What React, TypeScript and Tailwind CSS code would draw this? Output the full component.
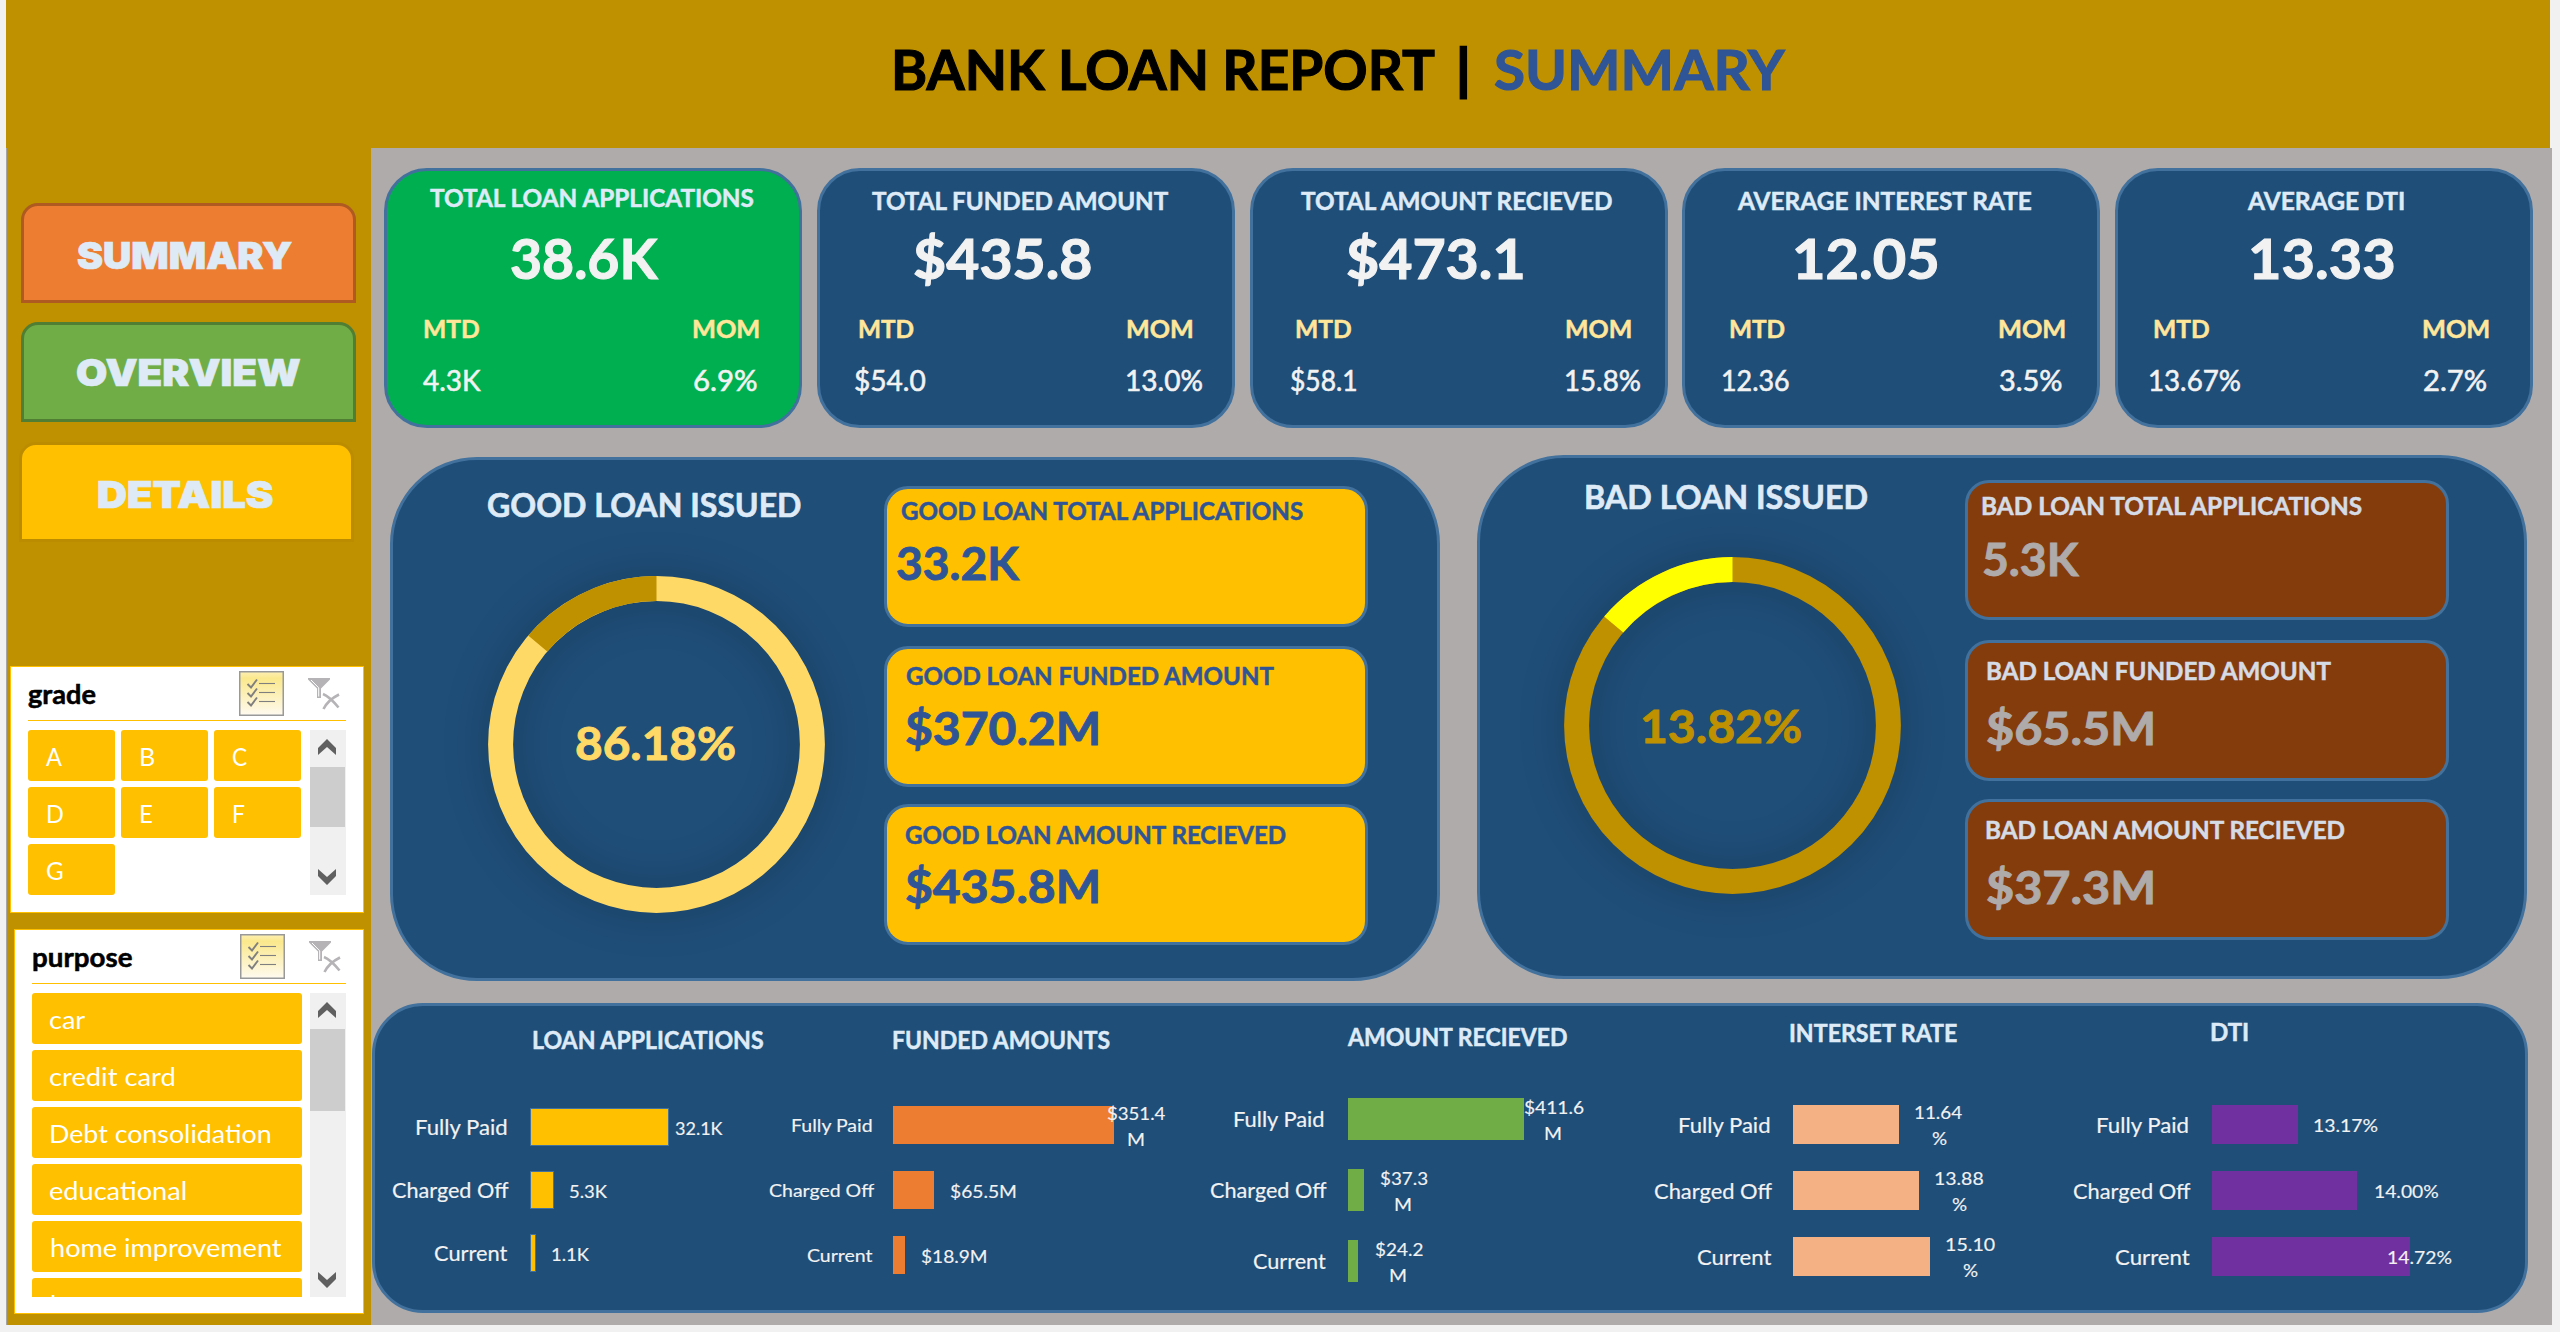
import { useLayoutEffect, useRef } from "react";

type FitProps = { x?: number; w: number; className?: string; children: string };

/** One line of text, stretched so that its ink starts at x and is w pixels wide. */
function Fit({ x = 0, w, className = "", children }: FitProps) {
  const ref = useRef<HTMLSpanElement>(null);
  useLayoutEffect(() => {
    const el = ref.current;
    const ctx = document.createElement("canvas").getContext("2d");
    if (!el || !ctx) return;
    const cs = getComputedStyle(el);
    ctx.font = `${cs.fontWeight} ${cs.fontSize} ${cs.fontFamily}`;
    const m = ctx.measureText(children);
    const s = w / (m.actualBoundingBoxLeft + m.actualBoundingBoxRight);
    el.style.marginLeft = `${x + m.actualBoundingBoxLeft * s}px`;
    el.style.transform = `translateY(calc(0.8px - 0.024em)) scaleX(${s})`;
  }, [x, w, children]);
  return (
    <div className={`flex w-0 shrink-0 items-center leading-none whitespace-nowrap ${className}`}>
      <span ref={ref} className="block origin-left [-webkit-text-stroke-width:var(--ink,0.02em)]">
        {children}
      </span>
    </div>
  );
}

type Span = [string, number, number];

const cards: {
  title: Span;
  value: Span;
  mtd: [number, number];
  mom: [number, number];
  mtdValue: Span;
  momValue: Span;
  fill: string;
  titleRow: string;
}[] = [
  { title: ["TOTAL LOAN APPLICATIONS", 43, 325], value: ["38.6K", 123.5, 147], mtd: [37.5, 55], mom: [306.5, 66], mtdValue: ["4.3K", 35.5, 58], momValue: ["6.9%", 307.5, 63], fill: "bg-[#00b050]", titleRow: "h-[54px] mb-[6px]" },
  { title: ["TOTAL FUNDED AMOUNT", 52.5, 298], value: ["$435.8", 94, 177], mtd: [39, 54.5], mom: [307, 65.5], mtdValue: ["$54.0", 35, 70.5], momValue: ["13.0%", 307, 75.5], fill: "bg-[#1f4e79]", titleRow: "h-[60px]" },
  { title: ["TOTAL AMOUNT RECIEVED", 48, 313], value: ["$473.1", 95, 175], mtd: [44, 55], mom: [313.5, 65], mtdValue: ["$58.1", 38.5, 65.5], momValue: ["15.8%", 313, 74.5], fill: "bg-[#1f4e79]", titleRow: "h-[60px]" },
  { title: ["AVERAGE INTEREST RATE", 52, 295.5], value: ["12.05", 110, 142], mtd: [45, 54.5], mom: [313.5, 66], mtdValue: ["12.36", 38, 66.5], momValue: ["3.5%", 315, 62], fill: "bg-[#1f4e79]", titleRow: "h-[60px]" },
  { title: ["AVERAGE DTI", 129, 157], value: ["13.33", 133.5, 142], mtd: [36.5, 55], mom: [305, 66], mtdValue: ["13.67%", 31.5, 90.5], momValue: ["2.7%", 306, 62.5], fill: "bg-[#1f4e79]", titleRow: "h-[60px]" },
];

function Cards() {
  return (
    <section className="ml-[13px] flex h-[260px] w-[2149px] justify-between">
      {cards.map((c) => (
        <article key={c.title[0]} className={`flex w-[418px] flex-col rounded-[43px] border-[3px] border-[#41719c] ${c.fill}`}>
          <div className={`flex ${c.titleRow}`}>
            <Fit x={c.title[1]} w={c.title[2]} className="text-[24.5px] font-bold text-[#deebf7]">{c.title[0]}</Fit>
          </div>
          <div className="flex h-[56px]">
            <Fit x={c.value[1]} w={c.value[2]} className="text-[56px] font-bold text-[#f2f2f2]">{c.value[0]}</Fit>
          </div>
          <div className="mt-5 flex h-[44px] text-[24.5px] font-bold text-[#ffe699]">
            <Fit x={c.mtd[0]} w={c.mtd[1]}>MTD</Fit>
            <Fit x={c.mom[0]} w={c.mom[1]}>MOM</Fit>
          </div>
          <div className="flex h-[57px] text-[28px] text-[#f2f2f2]">
            <Fit x={c.mtdValue[1]} w={c.mtdValue[2]}>{c.mtdValue[0]}</Fit>
            <Fit x={c.momValue[1]} w={c.momValue[2]}>{c.momValue[0]}</Fit>
          </div>
        </article>
      ))}
    </section>
  );
}

function Donut({ main, rest, children }: { main: string; rest: string; children: React.ReactNode }) {
  const r = 155.9;
  const c = 2 * Math.PI * r;
  return (
    <div className="grid h-[337px] w-[337px]">
      <svg viewBox="0 0 337 337" className="col-start-1 row-start-1 h-[337px] w-[337px] overflow-visible drop-shadow-[0_0_22px_rgba(0,0,0,0.22)]">
        <g fill="none" strokeWidth="25" transform="rotate(-90 168.5 168.5)">
          <circle cx="168.5" cy="168.5" r={r} stroke={main} />
          <circle cx="168.5" cy="168.5" r={r} stroke={rest} strokeDasharray={`${c * 0.1382} ${c}`} strokeDashoffset={-c * 0.8618} />
        </g>
      </svg>
      <div className="col-start-1 row-start-1 flex">{children}</div>
    </div>
  );
}

type Stat = { label: Span; value: Span; box: string; labelRow: string; valueRow: string };

const goodStats: Stat[] = [
  { label: ["GOOD LOAN TOTAL APPLICATIONS", 13.5, 404], value: ["33.2K", 9.5, 123], box: "h-[141px] mb-[19px]", labelRow: "h-[45px]", valueRow: "h-[57px]" },
  { label: ["GOOD LOAN FUNDED AMOUNT", 18.5, 369], value: ["$370.2M", 19.5, 192], box: "h-[141px] mb-[17px]", labelRow: "h-[55px]", valueRow: "h-[46px]" },
  { label: ["GOOD LOAN AMOUNT RECIEVED", 18, 382], value: ["$435.8M", 19, 192], box: "h-[141px]", labelRow: "h-[57px]", valueRow: "h-[43px]" },
];

const badStats: Stat[] = [
  { label: ["BAD LOAN TOTAL APPLICATIONS", 14.5, 382], value: ["5.3K", 16, 95.5], box: "h-[140px] mb-[20px]", labelRow: "h-[46px]", valueRow: "h-[59px]" },
  { label: ["BAD LOAN FUNDED AMOUNT", 19.5, 345], value: ["$65.5M", 20, 166], box: "h-[141px] mb-[18px]", labelRow: "h-[56px]", valueRow: "h-[57px]" },
  { label: ["BAD LOAN AMOUNT RECIEVED", 18.5, 360], value: ["$37.3M", 19.5, 166], box: "h-[141px]", labelRow: "h-[56px]", valueRow: "h-[57px]" },
];

function Stats({ stats, fill, label, value }: { stats: Stat[]; fill: string; label: string; value: string }) {
  return (
    <div className="flex flex-col">
      {stats.map((s) => (
        <div key={s.label[0]} className={`w-[484px] rounded-[24px] border-[3px] border-[#41719c] ${fill} ${s.box}`}>
          <div className={`flex ${s.labelRow}`}>
            <Fit x={s.label[1]} w={s.label[2]} className={`text-[24.5px] font-bold ${label}`}>{s.label[0]}</Fit>
          </div>
          <div className={`flex ${s.valueRow}`}>
            <Fit x={s.value[1]} w={s.value[2]} className={`text-[46.5px] font-bold ${value}`}>{s.value[0]}</Fit>
          </div>
        </div>
      ))}
    </div>
  );
}

function LoanPanels() {
  return (
    <section className="mt-[27px] ml-[19px] flex h-[526px] gap-[37px]">
      <article className="mt-[2px] flex h-[524px] w-[1050px] rounded-[87px] border-[3px] border-[#41719c] bg-[#1f4e79]">
        <div className="w-[491px] pt-[20px]">
          <div className="flex h-[50px]">
            <Fit x={95} w={312.5} className="pt-px text-[31.5px] font-bold text-[#deebf7]">GOOD LOAN ISSUED</Fit>
          </div>
          <div className="mt-[45.5px] ml-[94.5px]">
            <Donut main="#ffd966" rest="#bf9000">
              <Fit x={88.5} w={159} className="pb-[4px] text-[46.5px] font-bold text-[#ffd966]">86.18%</Fit>
            </Donut>
          </div>
        </div>
        <div className="pt-[26px]">
          <Stats stats={goodStats} fill="bg-[#ffc000]" label="text-[#2f5597]" value="text-[#2f5597]" />
        </div>
      </article>
      <article className="flex h-[524px] w-[1050px] rounded-[87px] border-[3px] border-[#41719c] bg-[#1f4e79]">
        <div className="w-[484.5px] pt-[14px]">
          <div className="flex h-[50px]">
            <Fit x={106} w={281} className="pt-px text-[31.5px] font-bold text-[#deebf7]">BAD LOAN ISSUED</Fit>
          </div>
          <div className="mt-[35px] ml-[84px]">
            <Donut main="#bf9000" rest="#ffff00">
              <Fit x={79.5} w={158} className="text-[46.5px] font-bold text-[#bf9000]">13.82%</Fit>
            </Donut>
          </div>
        </div>
        <div className="pt-[22px]">
          <Stats stats={badStats} fill="bg-[#843c0c]" label="text-[#d6dce5]" value="text-[#afabab]" />
        </div>
      </article>
    </section>
  );
}

type Row = { label: Span; bar: number; values: Span[] };
type Chart = { title: Span; column: string; titleRow: string; labelCell: string; labelText: string; row: string; bar: string; rows: Row[] };

const charts: Chart[] = [
  {
    title: ["LOAN APPLICATIONS", 157.5, 231], column: "w-[390px]", titleRow: "h-[68px] mb-[21.5px]", labelCell: "w-[155px]", labelText: "text-[20.5px]", row: "h-[63px]", bar: "h-[38px] bg-[#ffc000] border border-[#41719c]",
    rows: [
      { label: ["Fully Paid", 41, 91.6], bar: 139, values: [["32.1K", 6, 48.5]] },
      { label: ["Charged Off", 17, 117], bar: 24, values: [["5.3K", 16, 38]] },
      { label: ["Current", 59, 74], bar: 6, values: [["1.1K", 15.7, 38]] },
    ],
  },
  {
    title: ["FUNDED AMOUNTS", 127.5, 217.5], column: "w-[425px]", titleRow: "h-[68px] mb-[18.5px]", labelCell: "w-[128px]", labelText: "text-[18.2px]", row: "h-[65px]", bar: "h-[38px] bg-[#ed7d31]",
    rows: [
      { label: ["Fully Paid", 26.7, 79.8], bar: 221, values: [["$351.4", -7.3, 58.8], ["M", 14.5, 16]] },
      { label: ["Charged Off", 4, 105], bar: 41, values: [["$65.5M", 16.4, 66]] },
      { label: ["Current", 41.5, 66], bar: 12, values: [["$18.9M", 16.3, 65.6]] },
    ],
  },
  {
    title: ["AMOUNT RECIEVED", 157.5, 220.5], column: "w-[450px]", titleRow: "h-[62px] mb-[15.5px]", labelCell: "w-[158px]", labelText: "text-[20.5px]", row: "h-[71px]", bar: "h-[42px] bg-[#70ad47]",
    rows: [
      { label: ["Fully Paid", 44.5, 90.5], bar: 176, values: [["$411.6", -0.5, 59.5], ["M", 21.5, 16]] },
      { label: ["Charged Off", 19.5, 117], bar: 16, values: [["$37.3", 16.3, 47.5], ["M", 31.5, 16]] },
      { label: ["Current", 62.8, 73.5], bar: 10, values: [["$24.2", 17, 47.8], ["M", 32.5, 16]] },
    ],
  },
  {
    title: ["INTERSET RATE", 150, 168], column: "w-[410px]", titleRow: "h-[54px] mb-[31.5px]", labelCell: "w-[153px]", labelText: "text-[20.5px]", row: "h-[66px]", bar: "h-[39px] bg-[#f4b183]",
    rows: [
      { label: ["Fully Paid", 39, 91.5], bar: 105.5, values: [["11.64", 17, 47.5], ["%", 33.3, 14.5]] },
      { label: ["Charged Off", 14, 118.5], bar: 125.5, values: [["13.88", 16.7, 48], ["%", 33.3, 14.5]] },
      { label: ["Current", 56.5, 75], bar: 137, values: [["15.10", 16, 48.5], ["%", 33.2, 14.5]] },
    ],
  },
  {
    title: ["DTI", 160.5, 37], column: "w-[470px]", titleRow: "h-[51px] mb-[34.5px]", labelCell: "w-[162px]", labelText: "text-[20.5px]", row: "h-[66px]", bar: "h-[39px] bg-[#7030a0]",
    rows: [
      { label: ["Fully Paid", 47.4, 92], bar: 85.5, values: [["13.17%", 16.3, 63.3]] },
      { label: ["Charged Off", 22.5, 118], bar: 145, values: [["14.00%", 17.8, 63]] },
      { label: ["Current", 65, 75.5], bar: 198, values: [["14.72%", -21.7, 63.3]] },
    ],
  },
];

function Charts() {
  return (
    <section className="mt-[22px] ml-px flex h-[310px] w-[2156px] rounded-[51px] border-[3px] border-[#41719c] bg-[#1f4e79]">
      {charts.map((c) => (
        <div key={c.title[0]} className={`shrink-0 ${c.column}`}>
          <div className={`flex ${c.titleRow}`}>
            <Fit x={c.title[1]} w={c.title[2]} className="pt-px text-[24.5px] font-bold text-[#deebf7]">{c.title[0]}</Fit>
          </div>
          {c.rows.map((r) => (
            <div key={r.label[0]} className={`flex items-center text-[#f2f2f2] [--ink:0.008em] ${c.row}`}>
              <div className={`flex shrink-0 pt-px ${c.labelCell} ${c.labelText}`}>
                <Fit x={r.label[1]} w={r.label[2]}>{r.label[0]}</Fit>
              </div>
              <div className={`shrink-0 ${c.bar}`} style={{ width: r.bar }} />
              <div className="z-10 flex flex-col pt-[2px] text-[18.2px]">
                {r.values.map((v) => (
                  <Fit key={v[0]} x={v[1]} w={v[2]} className="h-[26px]">{v[0]}</Fit>
                ))}
              </div>
            </div>
          ))}
        </div>
      ))}
    </section>
  );
}

function MultiSelectIcon() {
  return (
    <svg viewBox="0 0 45 45" className="h-[45px] w-[45px] shrink-0">
      <defs>
        <linearGradient id="multi" x1="0" y1="0" x2="0" y2="1">
          <stop offset="0" stopColor="#fdf0b4" />
          <stop offset="0.15" stopColor="#fbe88c" />
          <stop offset="1" stopColor="#fefaf0" />
        </linearGradient>
      </defs>
      <rect x="0.75" y="0.75" width="43.5" height="43.5" fill="url(#multi)" stroke="#999" strokeWidth="1.5" />
      {[12.5, 21.5, 30.5].map((y) => (
        <g key={y} fill="none" stroke="#7f7f7f">
          <path d={`M8.5 ${y + 0.5}l3.5 3.5l6-8`} strokeWidth="1.9" />
          <path d={`M20 ${y}H36`} strokeWidth="1.1" />
        </g>
      ))}
    </svg>
  );
}

function ClearFilterIcon() {
  return (
    <svg viewBox="0 0 32 32" className="h-8 w-8 shrink-0">
      <path d="M0 0H22V1.5L13 10.5V20H9V10.5L0 1.5Z" fill="#b5b3b6" />
      <path d="M3 2L10.7 9.8V18.5" fill="none" stroke="#fff" strokeWidth="1" />
      <path d="M15 16C20 18 26 24 30.5 29.5M31 16.5C24 20 18 26 15.5 31" fill="none" stroke="#b5b3b6" strokeWidth="2.6" />
    </svg>
  );
}

function ScrollBar({ track, thumb, bottom }: { track: string; thumb: string; bottom: string }) {
  return (
    <div className={`flex w-[36px] flex-col bg-[#f0f0f0] ${track}`}>
      <svg viewBox="0 0 18 16" className="mt-[9px] ml-[8px] h-[16px] w-[18px] shrink-0" fill="#606060">
        <path d="M9 0L18 9V16L9 8L0 16V9Z" />
      </svg>
      <div className={`w-[35px] bg-[#cdcdcd] ${thumb}`} />
      <svg viewBox="0 0 18 16" className={`mt-auto ml-[8px] h-[16px] w-[18px] shrink-0 ${bottom}`} fill="#606060">
        <path d="M9 16L18 7V0L9 8L0 0V7Z" />
      </svg>
    </div>
  );
}

const grades: Span[] = [["A", 18, 16], ["B", 20, 13], ["C", 18.5, 14.5], ["D", 20, 15], ["E", 20, 11.5], ["F", 20, 11], ["G", 18.5, 15.5]];
const purposes: Span[] = [["car", 18.5, 35], ["credit card", 18.5, 124.5], ["Debt consolidation", 19.5, 219.5], ["educational", 18.5, 136], ["home improvement", 19.5, 230.5], ["house", 19.5, 70]];

function Sidebar() {
  return (
    <aside className="flex h-[1177px] w-[365px] flex-col border-l border-[#a5a5a5] bg-[#bf9000]">
      <nav className="ml-[14px] flex flex-col pt-[55px] text-[36.5px] font-black text-[#deebf7]">
        <div className="flex h-[100px] w-[335px] rounded-t-[17px] border-[3px] border-[#ae5a21] bg-[#ed7d31]">
          <Fit x={54.5} w={214} className="pt-[6px] font-['Inter']">SUMMARY</Fit>
        </div>
        <div className="mt-[19px] flex h-[100px] w-[335px] rounded-t-[17px] border-[3px] border-[#507e32] bg-[#70ad47]">
          <Fit x={53} w={223} className="pt-[3px] font-['Inter']">OVERVIEW</Fit>
        </div>
        <div className="mt-[20px] -ml-[2px] flex h-[100px] w-[335px] rounded-t-[17px] border-[3px] border-[#bc8c00] bg-[#ffc000]">
          <Fit x={76.5} w={175} className="pt-[7px] font-['Inter']">DETAILS</Fit>
        </div>
      </nav>

      <section className="mt-[124px] ml-[3px] h-[247px] w-[354px] border border-[#ffc000] bg-white">
        <header className="ml-[17px] flex h-[54px] w-[318px] border-b border-[#ffc000] text-[26px] font-bold text-black">
          <Fit x={0} w={68} className="pt-px">grade</Fit>
          <div className="mt-[4px] ml-[211px]"><MultiSelectIcon /></div>
          <div className="mt-[11px] ml-[24px]"><ClearFilterIcon /></div>
        </header>
        <div className="mt-[9px] ml-[17px] flex justify-between pr-[17px]">
          <div className="grid grid-cols-3 gap-[6px] text-[25px] text-white [--ink:0px]">
            {grades.map((g) => (
              <div key={g[0]} className="flex h-[51px] w-[87px] rounded-[3px] bg-[#ffc000]">
                <Fit x={g[1]} w={g[2]} className="pt-[2px]">{g[0]}</Fit>
              </div>
            ))}
          </div>
          <ScrollBar track="h-[165px]" thumb="h-[60px] mt-[12px]" bottom="mb-[10px]" />
        </div>
      </section>

      <section className="mt-[16px] ml-[7px] h-[385px] w-[350px] border border-[#ffc000] bg-white">
        <header className="ml-[17px] flex h-[54px] w-[314px] border-b border-[#ffc000] text-[26px] font-bold text-black">
          <Fit x={0.8} w={99.5} className="pt-px">purpose</Fit>
          <div className="mt-[4px] ml-[208px]"><MultiSelectIcon /></div>
          <div className="mt-[11px] ml-[24px]"><ClearFilterIcon /></div>
        </header>
        <div className="mt-[9px] ml-[17px] flex justify-between pr-[17px]">
          <div className="flex h-[304px] flex-col gap-[6px] overflow-hidden text-[25px] text-white [--ink:0px]">
            {purposes.map((p) => (
              <div key={p[0]} className="flex h-[51px] w-[270px] shrink-0 rounded-[3px] bg-[#ffc000]">
                <Fit x={p[1]} w={p[2]} className="pt-[2px]">{p[0]}</Fit>
              </div>
            ))}
          </div>
          <ScrollBar track="h-[304px]" thumb="h-[82px] mt-[11px]" bottom="mb-[9px]" />
        </div>
      </section>
    </aside>
  );
}

export default function App() {
  return (
    <div className="h-[1332px] w-[2560px] overflow-hidden bg-[#f1f1f1] pl-[6px] font-['Lato',sans-serif]">
      <header className="flex h-[148px] w-[2544px] bg-[#bf9000] text-[55px] font-bold">
        <h1 className="flex pb-[7px]">
          <Fit x={888.5} w={540} className="text-black">BANK LOAN REPORT</Fit>
          <Fit x={1454} w={7} className="text-black">|</Fit>
          <Fit x={1489} w={290} className="text-[#2f5597]">SUMMARY</Fit>
        </h1>
      </header>
      <div className="flex">
        <Sidebar />
        <main className="h-[1177px] w-[2181px] bg-[#afabab] pt-5">
          <Cards />
          <LoanPanels />
          <Charts />
        </main>
      </div>
    </div>
  );
}
